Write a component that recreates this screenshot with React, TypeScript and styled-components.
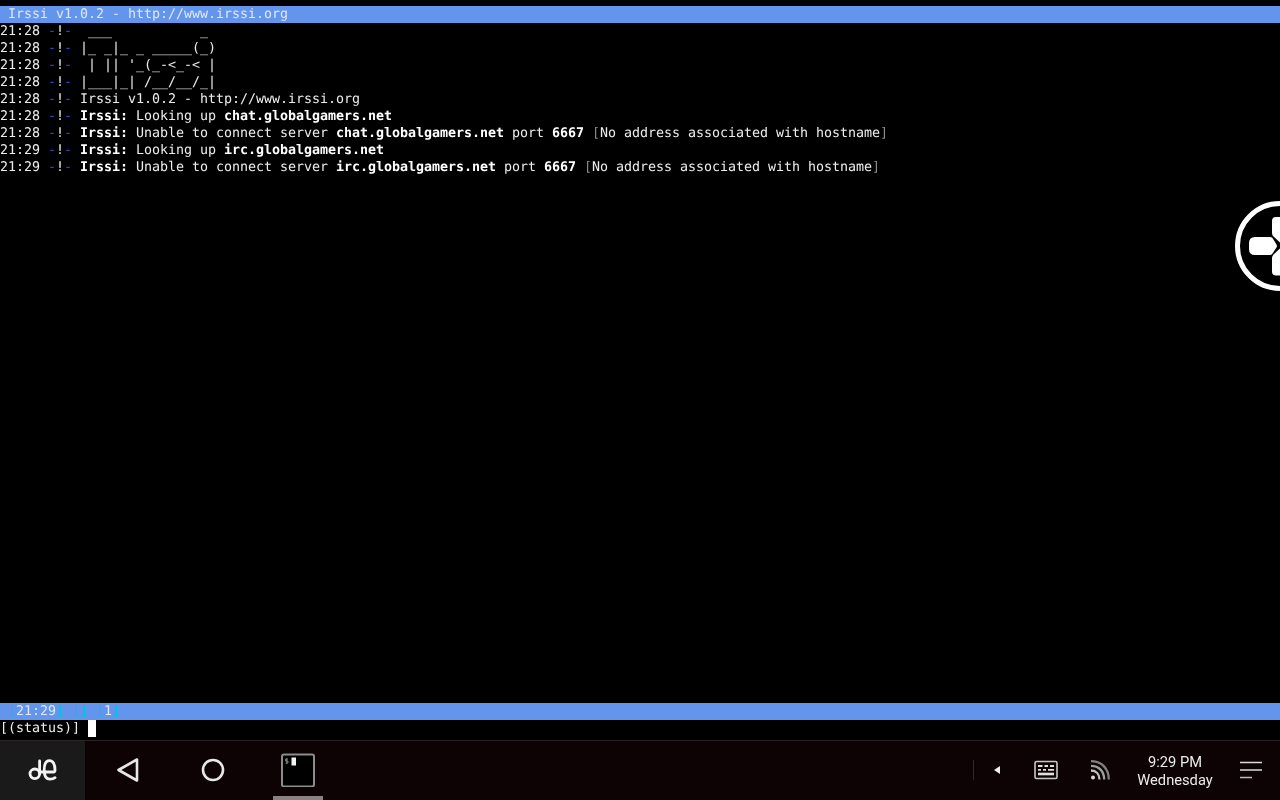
import React from "react";
import styled, { createGlobalStyle } from "styled-components";

const Global = createGlobalStyle`
  html, body { margin: 0; padding: 0; background: #000; }
  #root { width: 1280px; height: 800px; overflow: hidden; }
`;

const Screen = styled.div`
  position: relative;
  width: 1280px;
  height: 800px;
  background: #000;
  display: flex;
  flex-direction: column;
  overflow: hidden;
`;

const Terminal = styled.main`
  flex: 1;
  min-height: 0;
  padding-top: 6px;
  display: flex;
  flex-direction: column;
  font-family: "DejaVu Sans Mono", monospace;
  font-size: 13.33px;
  letter-spacing: -0.025px;
  line-height: 16px;
  color: #ececec;
  white-space: pre;
  font-variant-ligatures: none;
  text-rendering: geometricPrecision;
  will-change: transform;
`;

const Bar = styled.div`
  height: 17px;
  box-sizing: border-box;
  padding-top: 1px;
  flex: none;
  background: #6495ed;
  color: #dfe8fa;
`;

const Log = styled.div`
  flex: 1;
  min-height: 0;
`;

const Line = styled.div`
  height: 17px;
  box-sizing: border-box;
  padding-top: 1px;
`;

const Arrow = styled.span`
  color: #3a4ee0;
`;
const Bang = styled.span`
  color: #ececec;
`;
const Strong = styled.b`
  font-weight: 700;
  color: #fff;
`;
const Dim = styled.span`
  color: #8a8a8a;
`;
const Cyan = styled.span`
  color: #00c4d8;
`;

const InputLine = styled.div`
  height: 17px;
  flex: none;
  display: flex;
  line-height: 18px;
`;

const Cursor = styled.span`
  width: 8px;
  height: 17px;
  margin-left: 8px;
  background: #fff;
`;

const NavBar = styled.nav`
  flex: none;
  height: 60px;
  margin-top: 3px;
  box-sizing: border-box;
  border-top: 1px solid #2a2426;
  background: #0d0204;
  display: flex;
  align-items: stretch;
`;

const LogoButton = styled.div`
  width: 85px;
  padding-bottom: 1px;
  box-sizing: border-box;
  background: #1a1a1a;
  display: flex;
  align-items: center;
  justify-content: center;
`;

const NavButton = styled.div<{ $active?: boolean }>`
  position: relative;
  width: 85px;
  padding-bottom: 1px;
  box-sizing: border-box;
  display: flex;
  align-items: center;
  justify-content: center;
  ${(p) =>
    p.$active
      ? `&::after {
    content: "";
    position: absolute;
    left: 18px;
    width: 50px;
    bottom: 0;
    height: 4px;
    background: #8a8282;
  }`
      : ""}
`;

const Tray = styled.div`
  margin-left: auto;
  padding-bottom: 1px;
  display: flex;
  align-items: center;
`;

const Divider = styled.div`
  width: 1px;
  height: 20px;
  background: #2e2a2b;
`;

const TrayItem = styled.div<{ $w: number }>`
  width: ${(p) => p.$w}px;
  display: flex;
  align-items: center;
  justify-content: center;
`;

const Clock = styled.div`
  width: 92px;
  padding-top: 1px;
  text-align: center;
  font-family: Roboto, "Liberation Sans", sans-serif;
  font-size: 14.7px;
  line-height: 18px;
  color: #ececec;
  white-space: nowrap;
  will-change: transform;
`;

const FloatButton = styled.svg`
  position: absolute;
  right: 0;
  top: 200px;
`;

const stamp = (t: string) => (
  <>
    {t} <Arrow>-</Arrow>
    <Bang>!</Bang>
    <Arrow>-</Arrow>{" "}
  </>
);

const logo = [" ___           _", "|_ _|_ _ _____(_)", " | || '_(_-<_-< |", "|___|_| /__/__/_|"];

export default function App() {
  return (
    <Screen>
      <Global />
      <Terminal>
        <Bar> Irssi v1.0.2 - http://www.irssi.org</Bar>
        <Log>
          {logo.map((l) => (
            <Line key={l}>
              {stamp("21:28")}
              {l}
            </Line>
          ))}
          <Line>{stamp("21:28")}Irssi v1.0.2 - http://www.irssi.org</Line>
          <Line>
            {stamp("21:28")}
            <Strong>Irssi:</Strong> Looking up <Strong>chat.globalgamers.net</Strong>
          </Line>
          <Line>
            {stamp("21:28")}
            <Strong>Irssi:</Strong> Unable to connect server <Strong>chat.globalgamers.net</Strong> port{" "}
            <Strong>6667</Strong> <Dim>[</Dim>No address associated with hostname<Dim>]</Dim>
          </Line>
          <Line>
            {stamp("21:29")}
            <Strong>Irssi:</Strong> Looking up <Strong>irc.globalgamers.net</Strong>
          </Line>
          <Line>
            {stamp("21:29")}
            <Strong>Irssi:</Strong> Unable to connect server <Strong>irc.globalgamers.net</Strong> port{" "}
            <Strong>6667</Strong> <Dim>[</Dim>No address associated with hostname<Dim>]</Dim>
          </Line>
        </Log>
        <Bar>
          {" "}
          <Cyan>[</Cyan>21:29<Cyan>]</Cyan> <Cyan>[]</Cyan> <Cyan>[</Cyan>1<Cyan>]</Cyan>
        </Bar>
        <InputLine>
          [(status)]
          <Cursor />
        </InputLine>
      </Terminal>
      <NavBar>
        <LogoButton>
          <svg width="30" height="26" viewBox="0 0 30 26" fill="none" stroke="#f4f4f4" strokeWidth="2.8" strokeLinecap="round">
            <circle cx="6.8" cy="16.8" r="4.8" />
            <path d="M11.6 16.8V4" />
            <path d="M11.6 15H25.5Q27 15 27 13C27 7 24.8 3.6 21.5 3.6C18 3.6 16.2 7 16.2 13C16.2 19 18.5 22.2 22 22.2C24 22.2 25.8 21.7 27 20.7" />
          </svg>
        </LogoButton>
        <NavButton>
          <svg width="24" height="26" viewBox="0 0 24 26" fill="none" stroke="#e8e8e8" strokeWidth="2.6" strokeLinejoin="round">
            <path d="M21 2.5V23.5L2.5 13Z" />
          </svg>
        </NavButton>
        <NavButton>
          <svg width="24" height="24" viewBox="0 0 24 24" fill="none" stroke="#e8e8e8" strokeWidth="2.6">
            <circle cx="12" cy="12" r="10" />
          </svg>
        </NavButton>
        <NavButton $active>
          <svg width="34" height="34" viewBox="0 0 34 34">
            <rect x="1" y="1.5" width="32" height="32" rx="2" fill="#000" stroke="#8c8c8c" strokeWidth="2" />
            <rect x="10.5" y="4.5" width="4.5" height="8" fill="#f2f2f2" />
            <path d="M7 6H4.6V8H7V10H4.6M5.8 5.2V10.8" fill="none" stroke="#9a9a9a" strokeWidth="0.8" />
          </svg>
        </NavButton>
        <Tray>
          <Divider />
          <TrayItem $w={46}>
            <svg width="8" height="10" viewBox="0 0 8 10">
              <path d="M7 1V9L1 5Z" fill="#f0f0f0" />
            </svg>
          </TrayItem>
          <TrayItem $w={51}>
            <svg width="24" height="20" viewBox="0 0 24 20" fill="none">
              <rect x="1" y="1.5" width="22" height="17" rx="1.5" stroke="#c8c8c8" strokeWidth="1.6" />
              <path d="M4 6H8.5M10.5 6H14M16 6H20M4 9.8H7M9 9.8H12M14 9.8H20" stroke="#e0e0e0" strokeWidth="1.8" />
              <path d="M4 14H20" stroke="#e0e0e0" strokeWidth="2.6" />
            </svg>
          </TrayItem>
          <TrayItem $w={58}>
            <svg width="20" height="20" viewBox="0 0 20 20" fill="none" strokeWidth="2.3">
              <circle cx="3" cy="17.5" r="2" fill="#dcdcdc" />
              <path d="M1 10.5C6 10.5 9.5 14 9.5 19.5" stroke="#c0c0c0" />
              <path d="M1 5.8C9 5.8 14.2 11.5 14.2 19.5" stroke="#a0a0a0" />
              <path d="M1 1.2C12 1.2 18.8 9 18.8 19.5" stroke="#808080" />
            </svg>
          </TrayItem>
          <Clock>
            9:29 PM
            <br />
            Wednesday
          </Clock>
          <TrayItem $w={59}>
            <svg width="24" height="18" viewBox="0 0 24 18" fill="none" strokeWidth="1.5">
              <path d="M1 1.5H23" stroke="#dcdcdc" />
              <path d="M1 9H23" stroke="#dcdcdc" />
              <path d="M1 16.5H13" stroke="#bdbdbd" />
            </svg>
          </TrayItem>
        </Tray>
      </NavBar>
      <FloatButton width="46" height="92" viewBox="0 0 46 92">
        <circle cx="46" cy="46" r="42.5" fill="#000" stroke="#fff" strokeWidth="5" />
        <path d="M21 37H36Q37.5 37 38.5 38L42.5 44.5Q43.5 46 42.5 47.5L38.5 53.5Q37.5 55 36 55H21Q15 55 15 49V43Q15 37 21 37Z" fill="#fff" />
        <path d="M46 17H42Q38 17 38 21V33Q38 35 39.5 36.5L46 42.5Z" fill="#fff" />
        <path d="M46 48.5L39.5 54.5Q38 56 38 58V71.5Q38 75.5 42 75.5H46Z" fill="#fff" />
      </FloatButton>
    </Screen>
  );
}
